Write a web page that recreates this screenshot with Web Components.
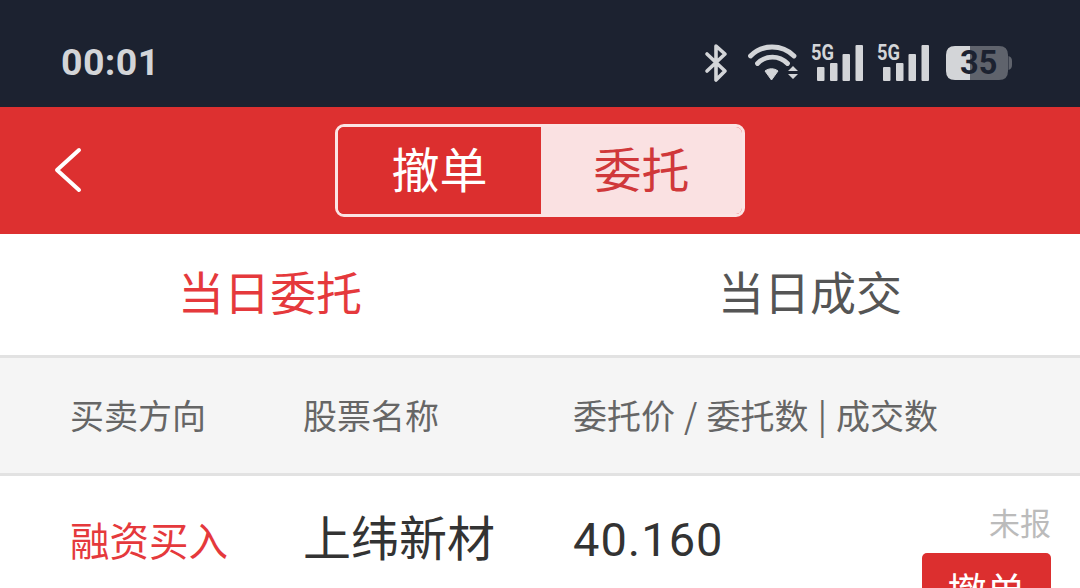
<!DOCTYPE html>
<html>
<head>
<meta charset="utf-8">
<style>
  html, body { margin: 0; height: 588px; overflow: hidden; background: #fff; }
  body { font-family: "Roboto", "Noto Sans CJK SC", sans-serif; }
</style>
</head>
<body>
<status-bar></status-bar>
<nav-bar></nav-bar>
<tab-bar></tab-bar>
<table-head></table-head>
<order-row></order-row>

<script>
// barre d'etat
class StatusBar extends HTMLElement {
  constructor() {
    super();
    const signal = `
      <svg width="52" height="38" viewBox="0 0 52 38">
        <text x="0" y="16" font-family="Roboto" font-weight="700" font-size="22" textLength="23" lengthAdjust="spacingAndGlyphs" fill="#d3d5d8">5G</text>
        <rect x="6" y="23" width="7.500" height="14" rx="1" fill="#d3d5d8"/>
        <rect x="19" y="19" width="7.500" height="18" rx="1" fill="#d3d5d8"/>
        <rect x="31.500" y="10" width="7.500" height="27" rx="1" fill="#d3d5d8"/>
        <rect x="44.500" y="1" width="7.500" height="36" rx="1" fill="#d3d5d8"/>
      </svg>`;
    this.attachShadow({ mode: "open" });
    this.shadowRoot.innerHTML = `
      <style>
        :host { display: flex; align-items: center; box-sizing: border-box; height: 107px; background: #1c2230; padding: 18px 68px 0 61px; color: #d3d5d8; }
        .time { font: 700 37.500px "Roboto", sans-serif; flex: 1; letter-spacing: .4px; margin-top: -2px; }
        .icons { display: flex; align-items: center; }
        svg { display: block; overflow: visible; }
        .sig2 { margin-left: 14px; }
        .wifi { margin: 0 13px 0 21px; }
        .bat { margin-left: 17px; position: relative; width: 66px; height: 34px; }
        .bat span { position: absolute; left: 14px; top: 0; font: 700 32.500px/35px "Roboto", sans-serif; color: #1c2230; }
      </style>
      <div class="time">00:01</div>
      <div class="icons">
        <svg width="22" height="38" viewBox="0 0 22 38" fill="none" stroke="#d3d5d8" stroke-width="3.600" stroke-linejoin="round" stroke-linecap="round">
          <path d="M2 10 L20 27 L11 36 V2 L20 10 L2 27"/>
        </svg>
        <svg class="wifi" width="50" height="36" viewBox="0 0 50 36">
          <g fill="none" stroke="#d3d5d8" stroke-width="4.800" stroke-linecap="round">
            <path d="M2.500 11 C14 -1 34 -1 46 11"/>
            <path d="M9.500 18.500 C18 10 31 10 39.500 18.500"/>
          </g>
          <path d="M17 26 C21 23 26 23 30 26 L23.500 35 Z" fill="#d3d5d8" stroke="#d3d5d8" stroke-width="1" stroke-linejoin="round"/>
          <path d="M40 26 L45 21 L50 26 Z M40 29 H50 L45 34 Z" fill="#d3d5d8"/>
        </svg>
        ${signal}
        <span class="sig2">${signal}</span>
        <div class="bat">
          <svg width="66" height="34" viewBox="0 0 66 34">
            <path d="M9 0 H24 V34 H9 Q0 34 0 25 V9 Q0 0 9 0 Z" fill="#d3d5d8"/>
            <path d="M24 0 H53 Q62 0 62 9 V25 Q62 34 53 34 H24 Z" fill="#5f636c"/>
            <path d="M62.500 10 Q66 11 66 15 V19 Q66 23 62.500 24 Z" fill="#5f636c"/>
          </svg>
          <span>35</span>
        </div>
      </div>`;
  }
}

// barre rouge avec le segment
class NavBar extends HTMLElement {
  constructor() {
    super();
    this.attachShadow({ mode: "open" });
    this.shadowRoot.innerHTML = `
      <style>
        :host { display: flex; align-items: center; justify-content: center; position: relative; height: 127px; background: #dd3030; }
        .back { position: absolute; left: 53px; top: 40px; }
        .seg { display: flex; box-sizing: border-box; width: 410px; height: 93px; margin-top: -1px; border: 3px solid #fbe4e4; border-radius: 9px; overflow: hidden; font: 400 48px/1 "Noto Sans CJK SC", sans-serif; }
        .seg div { display: flex; align-items: center; justify-content: center; padding-bottom: 6px; }
        .on { width: 203px; color: #fff; background: #dc2f2f; }
        .off { flex: 1; color: #d0383a; background: #fae1e2; }
      </style>
      <svg class="back" width="30" height="46" viewBox="0 0 30 46" fill="none" stroke="#fff" stroke-width="4" stroke-linecap="round" stroke-linejoin="round">
        <path d="M26 3 L4 23 L26 43"/>
      </svg>
      <div class="seg">
        <div class="on">撤单</div>
        <div class="off">委托</div>
      </div>`;
  }
}

class TabBar extends HTMLElement {
  constructor() {
    super();
    this.attachShadow({ mode: "open" });
    this.shadowRoot.innerHTML = `
      <style>
        :host { display: grid; grid-template-columns: 540px 540px; height: 124px; box-sizing: border-box; border-bottom: 3px solid #e2e2e2; background: #fff; font: 400 46px/1 "Noto Sans CJK SC", sans-serif; }
        div { display: flex; align-items: center; justify-content: center; color: #555; padding-bottom: 10px; }
        .active { color: #e5393c; }
      </style>
      <div class="active">当日委托</div>
      <div>当日成交</div>`;
  }
}

class TableHead extends HTMLElement {
  constructor() {
    super();
    this.attachShadow({ mode: "open" });
    this.shadowRoot.innerHTML = `
      <style>
        :host { display: grid; grid-template-columns: 233px 270px 1fr; align-items: center; box-sizing: border-box; height: 118px; padding: 0 0 2px 70px; background: #f5f5f5; border-bottom: 3px solid #e2e2e2; color: #666; font: 400 34px/1 "Noto Sans CJK SC", sans-serif; }
        .wide { word-spacing: 1.500px; }
      </style>
      <div>买卖方向</div>
      <div>股票名称</div>
      <div class="wide">委托价 / 委托数 | 成交数</div>`;
  }
}

class OrderRow extends HTMLElement {
  constructor() {
    super();
    this.attachShadow({ mode: "open" });
    this.shadowRoot.innerHTML = `
      <style>
        :host { display: grid; grid-template-columns: 233px 270px 1fr auto; box-sizing: border-box; height: 115px; padding: 0 29px 0 70px; background: #fff; }
        .side { color: #e5393c; font: 400 39.500px/1 "Noto Sans CJK SC", sans-serif; padding-top: 43px; }
        .name { color: #333; font: 400 48px/1 "Noto Sans CJK SC", sans-serif; padding-top: 35px; }
        .price { color: #333; font: 400 47px/1 "Roboto", sans-serif; padding-top: 40px; letter-spacing: 1px; }
        .right { display: flex; flex-direction: column; align-items: flex-end; padding-top: 30px; }
        .state { color: #bbb; font: 400 31px/1 "Noto Sans CJK SC", sans-serif; }
        .btn { width: 129px; height: 60px; margin-top: 16px; background: #dc2f2f; border-radius: 5px; color: #fff; text-align: center; font: 400 39px/1 "Noto Sans CJK SC", sans-serif; padding-top: 17px; box-sizing: border-box; }
      </style>
      <div class="side">融资买入</div>
      <div class="name">上纬新材</div>
      <div class="price">40.160</div>
      <div class="right">
        <div class="state">未报</div>
        <div class="btn">撤单</div>
      </div>`;
  }
}

customElements.define("status-bar", StatusBar);
customElements.define("nav-bar", NavBar);
customElements.define("tab-bar", TabBar);
customElements.define("table-head", TableHead);
customElements.define("order-row", OrderRow);
</script>
</body>
</html>
